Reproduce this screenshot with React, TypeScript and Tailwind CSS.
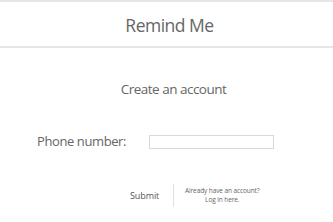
export default function App() {
  return (
    <div className="w-[333px] h-[222px] bg-white text-[#666] font-['Open_Sans',sans-serif] overflow-hidden">
      <header className="border-t-2 border-b-2 border-[#e6e6e6] h-[48px] flex items-center justify-center">
        <h1 className="text-[17.5px] leading-none tracking-[-0.5px] pt-[3px] pl-[6px]">Remind Me</h1>
      </header>
      <div className="flex justify-center pt-[35px] pl-[14px]">
        <h2 className="text-[13.5px] leading-none tracking-[-0.5px]">Create an account</h2>
      </div>
      <div className="flex items-center mt-[38px] pl-[37px]">
        <label className="text-[13px] leading-none tracking-[-0.4px] w-[112px]">Phone number:</label>
        <input className="w-[125px] h-[14px] border border-[#d9d9d9] outline-none" />
      </div>
      <div className="flex items-center mt-[35px] pl-[130px]">
        <button className="text-[9px] leading-none text-[#555] tracking-[-0.1px] w-[43px] text-left">Submit</button>
        <div className="w-px h-[23px] bg-[#e0e0e0]" />
        <div className="ml-[11px] text-[6.5px] leading-[9.5px] tracking-[-0.1px] text-center text-[#666]">
          <p>Already have an account?</p>
          <p>Log in here.</p>
        </div>
      </div>
    </div>
  );
}
